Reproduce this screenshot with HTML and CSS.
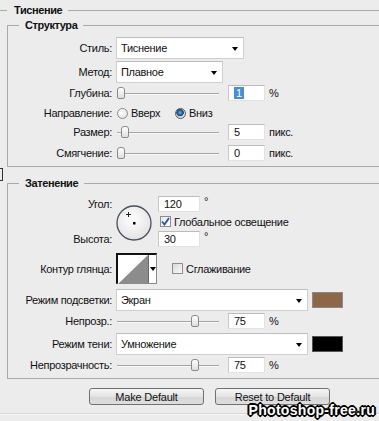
FILE: index.html
```html
<!DOCTYPE html>
<html lang="ru">

<head>
  <meta charset="UTF-8" />
  <meta name="viewport" content="width=device-width, initial-scale=1.0" />
  <title>Тиснение</title>
  <link rel="stylesheet" href="styles.css">
</head>

<body>
  <!-- край списка стилей слева -->
  <div class="list-edge"></div>

  <fieldset class="group">
    <legend class="group-title">Тиснение</legend>

    <fieldset class="box box-structure">
      <legend class="box-title">Структура</legend>

      <div class="row row-select">
        <span class="lbl">Стиль:</span>
        <div class="select select-style">Тиснение<span class="arrow"></span></div>
      </div>

      <div class="row row-select row-gap2">
        <span class="lbl">Метод:</span>
        <div class="select select-method">Плавное<span class="arrow"></span></div>
      </div>

      <div class="row row-gap2">
        <span class="lbl">Глубина:</span>
        <div class="slider"><span class="thumb" style="left:0px"></span></div>
        <div class="field"><span class="selected">1</span></div>
        <span class="unit">%</span>
      </div>

      <div class="row row-gap4">
        <span class="lbl">Направление:</span>
        <label class="radio-item radio-first"><span class="radio"></span>Вверх</label>
        <label class="radio-item"><span class="radio checked"></span>Вниз</label>
      </div>

      <div class="row row-gap3">
        <span class="lbl">Размер:</span>
        <div class="slider"><span class="thumb" style="left:4px"></span></div>
        <div class="field">5</div>
        <span class="unit">пикс.</span>
      </div>

      <div class="row row-gap5">
        <span class="lbl">Смягчение:</span>
        <div class="slider"><span class="thumb" style="left:0px"></span></div>
        <div class="field">0</div>
        <span class="unit">пикс.</span>
      </div>
    </fieldset>

    <fieldset class="box box-shading">
      <legend class="box-title">Затенение</legend>

      <div class="angle">
        <span class="lbl angle-top">Угол:</span>
        <span class="lbl angle-bottom">Высота:</span>
        <svg class="dial" width="36" height="36" viewBox="0 0 36 36">
          <defs>
            <radialGradient id="dialFill" cx="45%" cy="40%" r="60%">
              <stop offset="0" stop-color="#ffffff" />
              <stop offset="1" stop-color="#e3e3e3" />
            </radialGradient>
          </defs>
          <circle cx="18" cy="18" r="17" fill="url(#dialFill)" stroke="#4a4f5e" stroke-width="1.3" />
          <path d="M12.5 7v5M10 9.5h5" stroke="#222" stroke-width="1" />
          <rect x="17" y="17" width="2.5" height="2.5" fill="#000" />
        </svg>
        <div class="angle-line angle-top">
          <div class="field field-wide">120</div>
          <span class="deg">°</span>
        </div>
        <label class="check-item angle-mid"><span class="check checked"><svg width="9" height="9" viewBox="0 0 9 9"><path d="M1 4.5l2.5 3L8 1" fill="none" stroke="#2b52a6" stroke-width="1.8" /></svg></span>Глобальное освещение</label>
        <div class="angle-line angle-bottom">
          <div class="field field-wide">30</div>
          <span class="deg">°</span>
        </div>
      </div>

      <div class="row row-contour">
        <span class="lbl">Контур глянца:</span>
        <div class="contour">
          <svg class="contour-curve" width="30" height="29" viewBox="0 0 30 29">
            <rect width="30" height="29" fill="#fff" />
            <polygon points="0,29 30,0 30,29" fill="#8c8c8c" />
          </svg>
          <span class="contour-arrow"><span class="arrow"></span></span>
        </div>
        <label class="check-item check-smooth"><span class="check"></span>Сглаживание</label>
      </div>

      <div class="row row-select row-gap5">
        <span class="lbl">Режим подсветки:</span>
        <div class="select select-mode">Экран<span class="arrow"></span></div>
        <span class="swatch swatch-light"></span>
      </div>

      <div class="row row-gap2">
        <span class="lbl">Непрозр.:</span>
        <div class="slider"><span class="thumb" style="left:74px"></span></div>
        <div class="field">75</div>
        <span class="unit">%</span>
      </div>

      <div class="row row-select row-gap4">
        <span class="lbl">Режим тени:</span>
        <div class="select select-mode">Умножение<span class="arrow"></span></div>
        <span class="swatch swatch-shadow"></span>
      </div>

      <div class="row row-gap2">
        <span class="lbl">Непрозрачность:</span>
        <div class="slider"><span class="thumb" style="left:74px"></span></div>
        <div class="field">75</div>
        <span class="unit">%</span>
      </div>
    </fieldset>
  </fieldset>

  <div class="buttons">
    <button>Make Default</button>
    <button>Reset to Default</button>
  </div>

  <div class="bottom-line"></div>

  <div class="watermark">Photoshop-free.ru</div>
</body>

</html>
```

FILE: styles.css
```css
    body {
      margin: 0;
      width: 379px;
      height: 421px;
      overflow: hidden;
      position: relative;
      background: #ececec;
      color: #111;
      font-family: "Liberation Sans", Arial, sans-serif;
      font-size: 11px;
      letter-spacing: -0.3px;
    }

    .list-edge {
      position: absolute;
      left: 0;
      top: 168px;
      width: 2px;
      height: 11px;
      border: 1px solid #333;
      border-left: none;
    }

    .group {
      margin: 3px 0 0 0;
      padding: 0 0 0 7px;
      border: none;
      border-top: 1px solid #a9a9a9;
      min-width: 0;
    }

    .group-title,
    .box-title {
      padding: 0 6px;
      font-weight: bold;
      line-height: 14px;
      letter-spacing: -0.4px;
      color: #111;
    }

    .group-title {
      padding-left: 7px;
    }

    .box {
      margin: 1px 0 0 0;
      padding: 5px 0 5px 11px;
      border: 1px solid #a9a9a9;
      border-right: none;
      min-width: 0;
    }

    .box-shading {
      margin-top: 9px;
      padding-top: 6px;
    }

    .row {
      display: flex;
      align-items: center;
      height: 16px;
    }

    .row-select {
      height: 22px;
    }

    .row-gap2 { margin-top: 2px; }
    .row-gap3 { margin-top: 3px; }
    .row-gap4 { margin-top: 4px; }
    .row-gap5 { margin-top: 5px; }

    .lbl {
      width: 93px;
      margin-right: 4px;
      text-align: right;
      white-space: nowrap;
      flex-shrink: 0;
    }

    /* выпадающие списки */
    .select {
      position: relative;
      box-sizing: border-box;
      height: 22px;
      padding-left: 4px;
      line-height: 21px;
      background: #fff;
      border: 1px solid #cfcfcf;
      border-top-color: #bdbdbd;
    }

    .select-style { width: 128px; }
    .select-method { width: 107px; }
    .select-mode { width: 192px; }

    .select .arrow {
      position: absolute;
      right: 5px;
      top: 9px;
    }

    .arrow {
      display: block;
      width: 0;
      height: 0;
      border-left: 3.5px solid transparent;
      border-right: 3.5px solid transparent;
      border-top: 4px solid #000;
    }

    /* ползунки */
    .slider {
      position: relative;
      width: 102px;
      height: 16px;
      margin-left: 1px;
      flex-shrink: 0;
    }

    .slider::before {
      content: "";
      position: absolute;
      left: 0;
      right: 0;
      top: 8px;
      height: 1px;
      background: #a5a5a5;
      box-shadow: 0 1px #f8f8f8;
    }

    .thumb {
      position: absolute;
      top: 2px;
      width: 6px;
      height: 10px;
      border: 1px solid #8a8a8a;
      border-radius: 3px 3px 2px 2px;
      background: linear-gradient(#fff, #dedede);
    }

    .field {
      box-sizing: border-box;
      width: 37px;
      height: 16px;
      margin-left: 9px;
      padding-left: 5px;
      line-height: 15px;
      background: #fff;
      border: 1px solid #e2e2e2;
      border-top-color: #bcbcbc;
      border-left-color: #c8c8c8;
    }

    .field-wide {
      width: 42px;
      margin-left: 0;
    }

    .selected {
      display: inline-block;
      padding: 0 2px;
      background: #4a8fd6;
      color: #fff;
      line-height: 12px;
    }

    .unit {
      margin-left: 4px;
    }

    /* радиокнопки и флажки */
    .radio-item,
    .check-item {
      display: flex;
      align-items: center;
      gap: 3px;
      white-space: nowrap;
    }

    .radio-first {
      width: 58px;
      margin-left: 1px;
    }

    .radio {
      box-sizing: border-box;
      width: 11px;
      height: 11px;
      border: 1px solid #8c8c8c;
      border-radius: 50%;
      background: radial-gradient(circle at 40% 40%, #fff, #d9d9d9);
    }

    .radio.checked {
      border-color: #5a5a5a;
      background: radial-gradient(circle at 45% 40%, #6fb0e0 0, #1d5f98 2.5px, #1a4f80 3.5px, #dcdcdc 4px);
    }

    .check {
      box-sizing: border-box;
      display: flex;
      align-items: center;
      justify-content: center;
      width: 11px;
      height: 11px;
      border: 1px solid #8e8e8e;
      background: linear-gradient(135deg, #d8d8d8, #fafafa);
    }

    .check.checked {
      background: linear-gradient(135deg, #e6e6e6, #fff);
    }

    /* угол и высота */
    .angle {
      display: grid;
      grid-template-columns: 93px 38px 1fr;
      grid-template-rows: 16px 19px 16px;
      column-gap: 4px;
      align-items: center;
    }

    .angle .lbl {
      width: auto;
      margin: 0;
      grid-column: 1;
    }

    .angle-top { grid-row: 1; }
    .angle-mid { grid-row: 2; grid-column: 3; margin-left: 2px; }
    .angle-bottom { grid-row: 3; }

    .dial {
      grid-column: 2;
      grid-row: 1 / 4;
      margin-top: 3px;
    }

    .angle-line {
      grid-column: 3;
      display: flex;
      align-items: center;
    }

    .deg {
      margin-left: 4px;
      align-self: flex-start;
      line-height: 10px;
    }

    /* контур глянца */
    .row-contour {
      height: 31px;
      margin-top: 6px;
    }

    .contour {
      display: flex;
      width: 41px;
      height: 31px;
      box-sizing: border-box;
      border: 1px solid #8a8a8a;
      border-top: 2px solid #111;
      border-left: 2px solid #111;
      background: #fff;
    }

    .contour-curve {
      display: block;
    }

    .contour-arrow {
      flex: 1;
      display: flex;
      align-items: center;
      justify-content: center;
      border-left: 1px solid #6a6a6a;
    }

    .check-smooth {
      margin-left: 15px;
    }

    .swatch {
      width: 31px;
      height: 16px;
      margin-left: 4px;
      box-sizing: border-box;
      border: 1px solid #8a8a8a;
    }

    .swatch-light { background: #8d6747; }
    .swatch-shadow { background: #000; border-color: #555; }

    /* кнопки */
    .buttons {
      display: flex;
      gap: 11px;
      margin-top: 9px;
      padding-left: 89px;
    }

    button {
      width: 115px;
      height: 17px;
      padding: 0;
      border: 1px solid #707070;
      border-radius: 3px;
      background: linear-gradient(#f6f6f6, #e4e4e4 50%, #d6d6d6 51%, #dedede);
      color: #111;
      font-family: "Liberation Sans", Arial, sans-serif;
      font-size: 11px;
      letter-spacing: -0.2px;
    }

    .bottom-line {
      margin-top: 8px;
      border-top: 1px solid #d6d6d6;
      border-bottom: 1px solid #fbfbfb;
    }

    .watermark {
      position: absolute;
      right: 4px;
      bottom: 3px;
      color: #fff;
      font-family: "Liberation Sans", Arial, sans-serif;
      font-weight: bold;
      font-size: 14px;
      letter-spacing: 0.3px;
      text-shadow:
        1px 0 #000, -1px 0 #000, 0 1px #000, 0 -1px #000,
        1px 1px #000, -1px -1px #000, 1px -1px #000, -1px 1px #000,
        2px 0 #000, -2px 0 #000, 0 2px #000, 0 -2px #000;
    }
```
